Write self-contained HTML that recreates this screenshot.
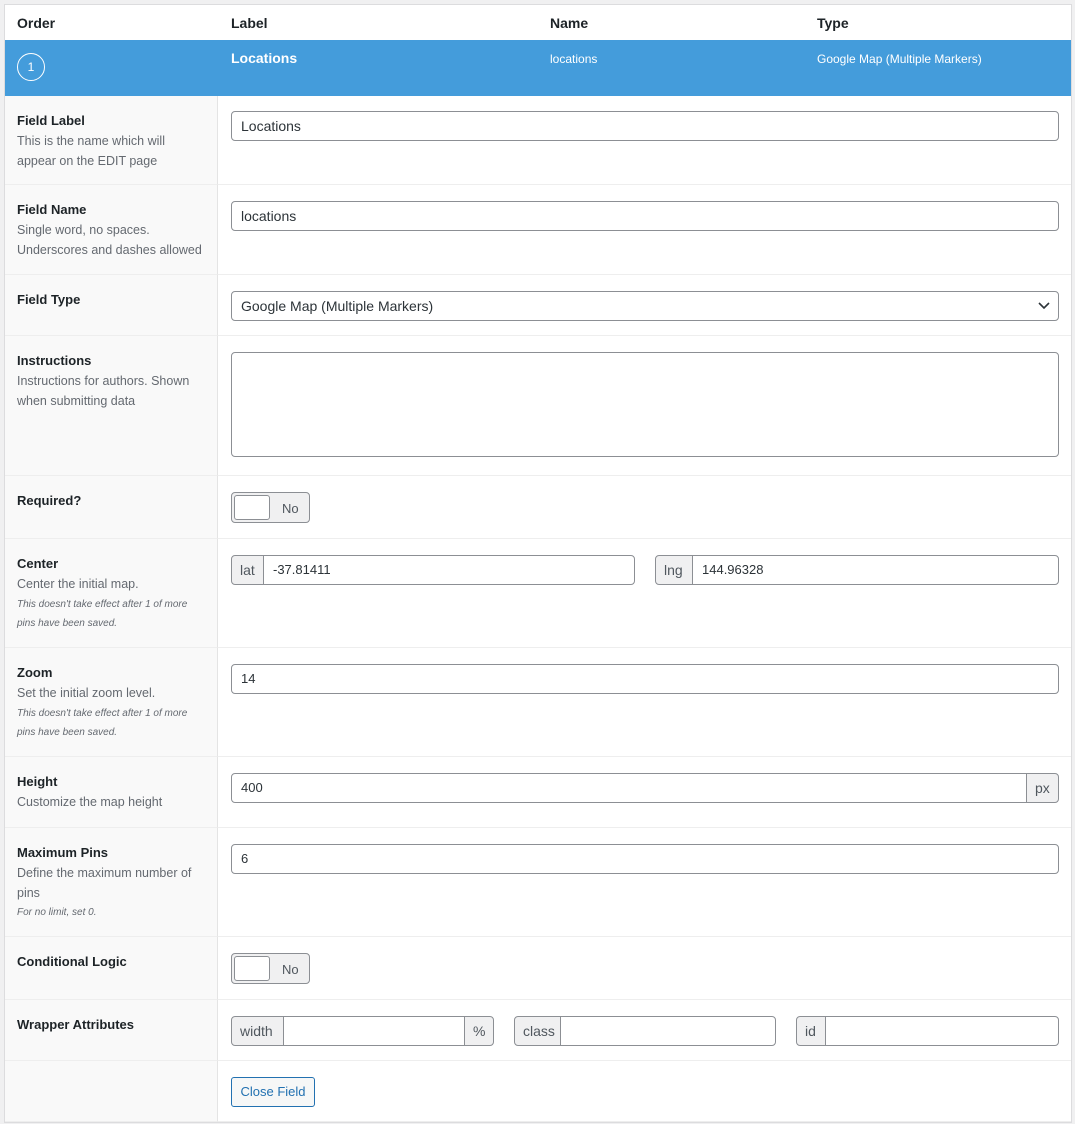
<!DOCTYPE html>
<html><head><style>
*{box-sizing:border-box;margin:0;padding:0}
body{width:1075px;height:1124px;background:#f0f0f1;font-family:"Liberation Sans",sans-serif;color:#1d2327;position:relative;overflow:hidden}
.a{position:absolute}
.wrap{left:4px;top:4px;width:1068px;height:1119px;background:#fff;border:1px solid #dcdcde}
.h{font-weight:bold;font-size:14px;top:15px}
.blue{left:5px;top:40px;width:1066px;height:56px;background:#449cdb;color:#fff}
.lab{left:5px;width:213px;background:#f9f9f9;border-right:1px solid #e4e4e4;border-bottom:1px solid #eee;padding:17px 12px 0 12px}
.row{left:218px;width:853px;border-bottom:1px solid #eee}
.lab b{display:block;font-size:13px;color:#1d2327;margin-bottom:4px}
.lab p{font-size:12.5px;color:#646970;line-height:19.5px}
.lab i{display:block;font-size:10px;color:#646970;line-height:19px;max-width:182px}
.in{border:1px solid #8c8f94;border-radius:4px;background:#fff;height:30px;font-size:14px;padding:6px 9px;color:#2c3338}
.ad{background:#f0f0f1;border:1px solid #8c8f94;height:30px;font-size:14px;color:#50575e;padding:6px 8px}
.tog{border:1px solid #8c8f94;border-radius:4px;background:#f0f0f1;width:79px;height:31px}
.tog .k{position:absolute;left:2px;top:2px;width:36px;height:25px;background:#fff;border:1px solid #8c8f94;border-radius:3px}
.tog span{position:absolute;left:50px;top:8px;font-size:13px;color:#50575e}
</style></head><body>
<div class="a wrap"></div>
<div class="a h" style="left:17px">Order</div>
<div class="a h" style="left:231px">Label</div>
<div class="a h" style="left:550px">Name</div>
<div class="a h" style="left:817px">Type</div>
<div class="a blue"></div>
<div class="a" style="left:17px;top:53px;width:28px;height:28px;border:1.5px solid #fff;border-radius:50%;color:#fff;font-size:12px;display:flex;align-items:center;justify-content:center">1</div>
<div class="a" style="left:231px;top:50px;color:#fff;font-weight:bold;font-size:14px">Locations</div>
<div class="a" style="left:550px;top:52px;color:#fff;font-size:12px">locations</div>
<div class="a" style="left:817px;top:52px;color:#fff;font-size:12px">Google Map (Multiple Markers)</div>

<div class="a lab" style="top:96px;height:89px"><b>Field Label</b><p>This is the name which will<br>appear on the EDIT page</p></div>
<div class="a row" style="top:96px;height:89px"></div>
<div class="a in" style="left:231px;top:111px;width:828px">Locations</div>

<div class="a lab" style="top:185px;height:90px"><b>Field Name</b><p>Single word, no spaces.<br>Underscores and dashes allowed</p></div>
<div class="a row" style="top:185px;height:90px"></div>
<div class="a in" style="left:231px;top:201px;width:828px">locations</div>

<div class="a lab" style="top:275px;height:61px"><b>Field Type</b></div>
<div class="a row" style="top:275px;height:61px"></div>
<div class="a in" style="left:231px;top:291px;width:828px">Google Map (Multiple Markers)<svg class="a" style="right:8px;top:9px" width="12" height="10" viewBox="0 0 12 10"><path d="M1 2l5 5 5-5" fill="none" stroke="#2c3338" stroke-width="1.6"/></svg></div>

<div class="a lab" style="top:336px;height:140px"><b>Instructions</b><p>Instructions for authors. Shown<br>when submitting data</p></div>
<div class="a row" style="top:336px;height:140px"></div>
<div class="a in" style="left:231px;top:352px;width:828px;height:105px"></div>

<div class="a lab" style="top:476px;height:63px"><b>Required?</b></div>
<div class="a row" style="top:476px;height:63px"></div>
<div class="a tog" style="left:231px;top:492px"><div class="k"></div><span>No</span></div>

<div class="a lab" style="top:539px;height:109px"><b>Center</b><p>Center the initial map.</p><i>This doesn't take effect after 1 of more<br>pins have been saved.</i></div>
<div class="a row" style="top:539px;height:109px"></div>
<div class="a ad" style="left:231px;top:555px;width:33px;border-radius:4px 0 0 4px">lat</div>
<div class="a in" style="left:263px;top:555px;width:372px;border-radius:0 4px 4px 0;font-size:13px">-37.81411</div>
<div class="a ad" style="left:655px;top:555px;width:38px;border-radius:4px 0 0 4px">lng</div>
<div class="a in" style="left:692px;top:555px;width:367px;border-radius:0 4px 4px 0;font-size:13px">144.96328</div>

<div class="a lab" style="top:648px;height:109px"><b>Zoom</b><p>Set the initial zoom level.</p><i>This doesn't take effect after 1 of more<br>pins have been saved.</i></div>
<div class="a row" style="top:648px;height:109px"></div>
<div class="a in" style="left:231px;top:664px;width:828px;font-size:13px">14</div>

<div class="a lab" style="top:757px;height:71px"><b>Height</b><p>Customize the map height</p></div>
<div class="a row" style="top:757px;height:71px"></div>
<div class="a in" style="left:231px;top:773px;width:796px;border-radius:4px 0 0 4px;font-size:13px">400</div>
<div class="a ad" style="left:1026px;top:773px;width:33px;border-radius:0 4px 4px 0">px</div>

<div class="a lab" style="top:828px;height:109px"><b>Maximum Pins</b><p>Define the maximum number of<br>pins</p><i>For no limit, set 0.</i></div>
<div class="a row" style="top:828px;height:109px"></div>
<div class="a in" style="left:231px;top:844px;width:828px;font-size:13px">6</div>

<div class="a lab" style="top:937px;height:63px"><b>Conditional Logic</b></div>
<div class="a row" style="top:937px;height:63px"></div>
<div class="a tog" style="left:231px;top:953px"><div class="k"></div><span>No</span></div>

<div class="a lab" style="top:1000px;height:61px"><b>Wrapper Attributes</b></div>
<div class="a row" style="top:1000px;height:61px"></div>
<div class="a ad" style="left:231px;top:1016px;width:53px;border-radius:4px 0 0 4px">width</div>
<div class="a in" style="left:283px;top:1016px;width:182px;border-radius:0"></div>
<div class="a ad" style="left:464px;top:1016px;width:30px;border-radius:0 4px 4px 0">%</div>
<div class="a ad" style="left:514px;top:1016px;width:47px;border-radius:4px 0 0 4px">class</div>
<div class="a in" style="left:560px;top:1016px;width:216px;border-radius:0 4px 4px 0"></div>
<div class="a ad" style="left:796px;top:1016px;width:30px;border-radius:4px 0 0 4px">id</div>
<div class="a in" style="left:825px;top:1016px;width:234px;border-radius:0 4px 4px 0"></div>

<div class="a lab" style="top:1061px;height:61px"></div>
<div class="a row" style="top:1061px;height:61px"></div>
<div class="a" style="left:231px;top:1077px;width:84px;height:30px;border:1px solid #2271b1;border-radius:3px;background:#f6f7f7;color:#2271b1;font-size:13px;text-align:center;line-height:28px">Close Field</div>
</body></html>
